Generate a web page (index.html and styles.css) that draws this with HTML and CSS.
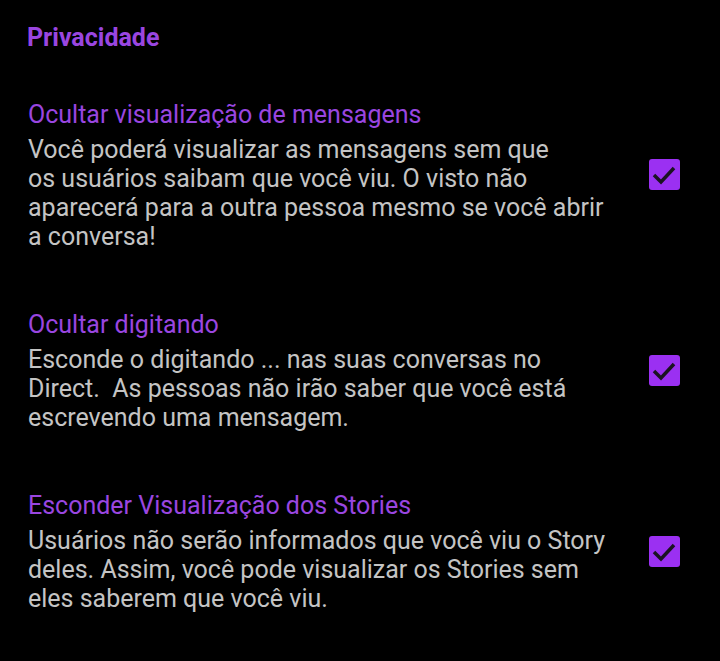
FILE: index.html
```html
<!DOCTYPE html>
<html lang="pt-BR">
<head>
  <meta charset="UTF-8" />
  <meta name="viewport" content="width=device-width, initial-scale=1.0"/>
  <title>Privacidade</title>
  <link rel="stylesheet" href="styles.css">
</head>
<body>

  <h1 class="group-title">Privacidade</h1>

  <div class="pref">
    <div class="pref-text">
      <h2>Ocultar visualização de mensagens</h2>
      <p>Você poderá visualizar as mensagens sem que<br>os usuários saibam que você viu. O visto não<br>aparecerá para a outra pessoa mesmo se você abrir<br>a conversa!</p>
    </div>
    <span class="check">
      <svg viewBox="0 0 31 31"><path d="M5 16 L12 23 L25 9" /></svg>
    </span>
  </div>

  <div class="pref">
    <div class="pref-text">
      <h2>Ocultar digitando</h2>
      <p>Esconde o digitando ... nas suas conversas no<br>Direct.&nbsp; As pessoas não irão saber que você está<br>escrevendo uma mensagem.</p>
    </div>
    <span class="check">
      <svg viewBox="0 0 31 31"><path d="M5 16 L12 23 L25 9" /></svg>
    </span>
  </div>

  <div class="pref">
    <div class="pref-text">
      <h2>Esconder Visualização dos Stories</h2>
      <p>Usuários não serão informados que você viu o Story<br>deles. Assim, você pode visualizar os Stories sem<br>eles saberem que você viu.</p>
    </div>
    <span class="check">
      <svg viewBox="0 0 31 31"><path d="M5 16 L12 23 L25 9" /></svg>
    </span>
  </div>

</body>
</html>
```

FILE: styles.css
```css
:root {
  --accent: #9a46e0;
  --check-bg: #9b30f2;
  --text: #c4c4c4;
}

* {
  box-sizing: border-box;
  margin: 0;
  padding: 0;
}

body {
  background: #000;
  color: var(--text);
  font-family: Roboto, "Noto Sans", sans-serif;
  padding: 22px 40px 0 27px;
}

.group-title {
  color: var(--accent);
  font-size: 25px;
  font-weight: 700;
  line-height: 32px;
  margin-bottom: 44px;
}

.pref {
  display: flex;
  align-items: center;
  justify-content: space-between;
  margin-bottom: 57px;
  padding-left: 1px;
}

.pref h2 {
  color: var(--accent);
  font-size: 25px;
  font-weight: 400;
  line-height: 34px;
}

.pref p {
  font-size: 25px;
  line-height: 29px;
  margin-top: 3px;
  white-space: nowrap;
}

.check {
  width: 31px;
  height: 31px;
  border-radius: 3px;
  background: var(--check-bg);
  display: flex;
}

.check svg {
  width: 31px;
  height: 31px;
}

.check path {
  fill: none;
  stroke: #1b1322;
  stroke-width: 3.5;
}
```
